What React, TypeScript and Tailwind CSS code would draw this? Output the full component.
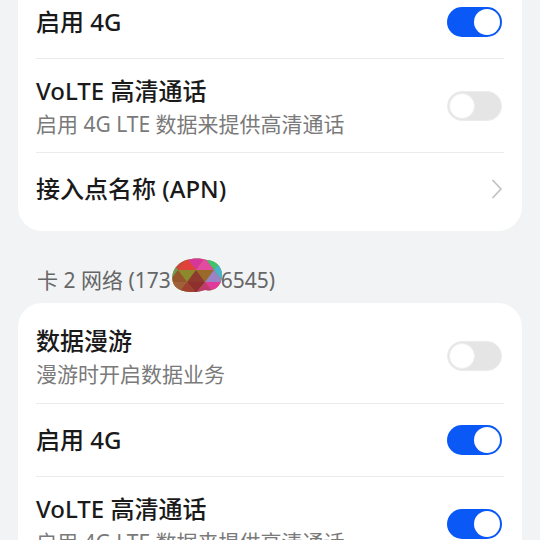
import React from "react";

const FONT = { fontFamily: '"Noto Sans", "Noto Sans CJK SC", sans-serif' };

function Toggle({ on }: { on: boolean }) {
  return on ? (
    <div className="mr-[2px] flex h-[30px] w-[55px] shrink-0 items-center justify-end rounded-full bg-[#0a59f7] pr-[2px]">
      <div className="h-[26px] w-[26px] rounded-full bg-white" />
    </div>
  ) : (
    <div className="mr-[2px] flex h-[30px] w-[55px] shrink-0 items-center justify-start rounded-full border border-[#ececec] bg-[#e5e5e5] pl-[1px]">
      <div className="h-[26px] w-[26px] rounded-full border border-[#eeeeee] bg-white" />
    </div>
  );
}

function Chevron() {
  return (
    <svg width="12" height="20" viewBox="0 0 12 20" className="mr-[1px] shrink-0">
      <polyline points="2,1.5 10,10 2,18.5" fill="none" stroke="#c2c2c2" strokeWidth="1.8" strokeLinecap="round" strokeLinejoin="round" />
    </svg>
  );
}

function SingleRow({ title, right, divider }: { title: string; right: React.ReactNode; divider?: boolean }) {
  return (
    <div className={divider ? "border-t border-[#ebebeb]" : ""}>
      <div className="flex h-[72px] items-center justify-between">
        <span className="text-[24px] font-medium leading-[30px] text-[#1a1a1a]">{title}</span>
        {right}
      </div>
    </div>
  );
}

function DoubleRow({ title, sub, right, divider, h }: { title: string; sub: string; right: React.ReactNode; divider?: boolean; h: string }) {
  return (
    <div className={divider ? "border-t border-[#ebebeb]" : ""}>
      <div className={"flex items-center justify-between " + h}>
        <div className="flex flex-col gap-[4px] self-start pt-[17px]">
          <span className="text-[24px] font-medium leading-[30px] text-[#1a1a1a]">{title}</span>
          <span className="text-[21px] leading-[28px] text-[#7a7a7a]">{sub}</span>
        </div>
        {right}
      </div>
    </div>
  );
}

function Blob() {
  return (
    <svg width="54" height="35" viewBox="0 0 54 35" className="mb-[8px] ml-[-2px] mr-[-2px] shrink-0">
      <defs>
        <clipPath id="blobclip">
          <path d="M9,7 C15,0 30,-1 38,2 C48,3 54,10 53,19 C52,29 44,34 36,32 C28,35 14,35 8,30 C2,26 1,14 9,7 Z" />
        </clipPath>
      </defs>
      <g clipPath="url(#blobclip)">
        <rect x="0" y="0" width="54" height="35" fill="#8d8a2e" />
        <polygon points="0,0 18,0 9,12" fill="#c9473a" />
        <polygon points="18,0 36,0 27,12" fill="#d8359a" />
        <polygon points="36,0 54,0 45,12" fill="#3ec46a" />
        <polygon points="9,12 18,0 27,12" fill="#e0413a" />
        <polygon points="27,12 36,0 45,12" fill="#e24ba0" />
        <polygon points="45,12 54,0 54,24" fill="#47b5c9" />
        <polygon points="0,0 9,12 0,24" fill="#6f9a58" />
        <polygon points="9,12 27,12 18,24" fill="#8d8a2e" />
        <polygon points="27,12 45,12 36,24" fill="#9a6a2a" />
        <polygon points="45,12 54,24 36,24" fill="#9a82c4" />
        <polygon points="0,24 9,12 18,24" fill="#94562a" />
        <polygon points="18,24 27,12 36,24" fill="#8f3a2e" />
        <polygon points="0,24 18,24 9,35" fill="#a0603a" />
        <polygon points="18,24 36,24 27,35" fill="#8f2f2e" />
        <polygon points="36,24 54,24 45,35" fill="#e23a9a" />
        <polygon points="9,35 18,24 27,35" fill="#a04030" />
        <polygon points="27,35 36,24 45,35" fill="#c03a70" />
      </g>
    </svg>
  );
}

export default function App() {
  return (
    <div className="h-[540px] w-[540px] overflow-hidden bg-[#f1f3f5]" style={FONT}>
      <div className="mt-[-21px] px-[18px]">
        <div className="rounded-[24px] bg-white px-[18px] py-[6px]">
          <div className="h-[73px]">
            <div className="flex h-[73px] items-center justify-between">
              <span className="text-[24px] font-medium leading-[30px] text-[#1a1a1a]">启用 4G</span>
              <Toggle on />
            </div>
          </div>
          <DoubleRow divider h="h-[93px]" title="VoLTE 高清通话" sub="启用 4G LTE 数据来提供高清通话" right={<Toggle on={false} />} />
          <SingleRow divider title="接入点名称 (APN)" right={<Chevron />} />
        </div>

        <div className="flex h-[72px] items-center px-[19px] pt-[25px] text-[21px] leading-[26px] text-[#666666]">
          <span>卡 2 网络 (173</span>
          <Blob />
          <span>6545)</span>
        </div>

        <div className="rounded-[24px] bg-white px-[18px] py-[6px]">
          <DoubleRow h="h-[94px]" title="数据漫游" sub="漫游时开启数据业务" right={<Toggle on={false} />} />
          <SingleRow divider title="启用 4G" right={<Toggle on />} />
          <DoubleRow divider h="h-[94px]" title="VoLTE 高清通话" sub="启用 4G LTE 数据来提供高清通话" right={<Toggle on />} />
        </div>
      </div>
    </div>
  );
}
